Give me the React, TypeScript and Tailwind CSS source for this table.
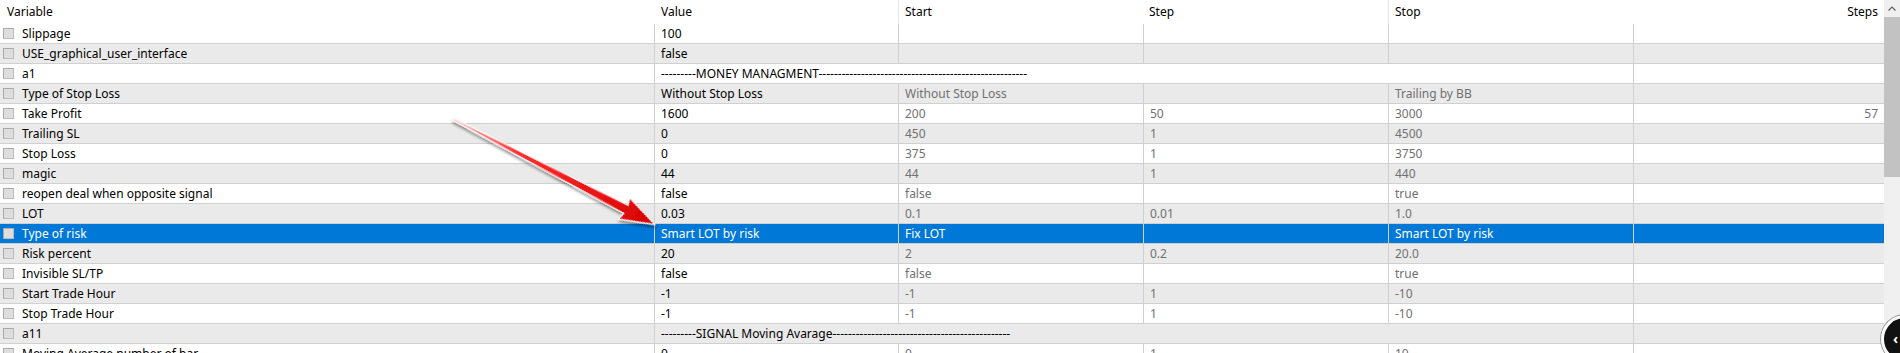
type Row = {
  name: string;
  value?: string;
  start?: string;
  step?: string;
  stop?: string;
  steps?: string;
  span?: boolean;
  selected?: boolean;
};

const rows: Row[] = [
  { name: "Slippage", value: "100" },
  { name: "USE_graphical_user_interface", value: "false" },
  {
    name: "a1",
    value: "---------MONEY MANAGMENT------------------------------------------------------",
    span: true,
  },
  {
    name: "Type of Stop Loss",
    value: "Without Stop Loss",
    start: "Without Stop Loss",
    stop: "Trailing by BB",
  },
  { name: "Take Profit", value: "1600", start: "200", step: "50", stop: "3000", steps: "57" },
  { name: "Trailing SL", value: "0", start: "450", step: "1", stop: "4500" },
  { name: "Stop Loss", value: "0", start: "375", step: "1", stop: "3750" },
  { name: "magic", value: "44", start: "44", step: "1", stop: "440" },
  { name: "reopen deal when opposite signal", value: "false", start: "false", stop: "true" },
  { name: "LOT", value: "0.03", start: "0.1", step: "0.01", stop: "1.0" },
  {
    name: "Type of risk",
    value: "Smart LOT by risk",
    start: "Fix LOT",
    stop: "Smart LOT by risk",
    selected: true,
  },
  { name: "Risk percent", value: "20", start: "2", step: "0.2", stop: "20.0" },
  { name: "Invisible SL/TP", value: "false", start: "false", stop: "true" },
  { name: "Start Trade Hour", value: "-1", start: "-1", step: "1", stop: "-10" },
  { name: "Stop Trade Hour", value: "-1", start: "-1", step: "1", stop: "-10" },
  {
    name: "a11",
    value: "---------SIGNAL Moving Avarage----------------------------------------------",
    span: true,
  },
  { name: "Moving Average number of bar", value: "0", start: "0", step: "1", stop: "10" },
];

const Checkbox = () => (
  <div className="h-[11px] w-[11px] shrink-0 border border-[#bcbcbc] border-l-[#a8a8a8] border-t-[#a8a8a8] bg-[#dedede]" />
);

const ArrowOverlay = () => (
  <svg
    className="pointer-events-none absolute left-0 top-0"
    width="1900"
    height="353"
    viewBox="0 0 1900 353"
  >
    <defs>
      <linearGradient id="arrowFill" x1="0" y1="0" x2="1" y2="0">
        <stop offset="0" stopColor="#ffd0d0" />
        <stop offset="0.3" stopColor="#ff3030" />
        <stop offset="1" stopColor="#d80000" />
      </linearGradient>
      <filter id="arrowShadow" x="-20%" y="-50%" width="140%" height="200%">
        <feDropShadow dx="1.5" dy="2" stdDeviation="1.5" floodColor="#000" floodOpacity="0.45" />
      </filter>
    </defs>
    <g transform="translate(453 119) rotate(27.6)" filter="url(#arrowShadow)">
      <polygon
        points="0,-1.2 195,-4.5 193,-12 228,0 193,12 195,4.5 0,1.2"
        fill="url(#arrowFill)"
        stroke="#ffffff"
        strokeWidth="1.2"
        strokeLinejoin="round"
      />
    </g>
  </svg>
);

const Scrollbar = () => (
  <div className="flex w-[16px] shrink-0 flex-col bg-[#f0f0f0]">
    <div className="flex h-[17px] items-center justify-center">
      <svg width="8" height="5" viewBox="0 0 8 5">
        <path d="M0.5 4.5 L4 1 L7.5 4.5" fill="none" stroke="#606060" strokeWidth="1.2" />
      </svg>
    </div>
    <div className="h-[160px] bg-[#c2c2c2]" />
  </div>
);

const Cell = ({
  text,
  dark,
  selected,
  right,
}: {
  text?: string;
  dark?: boolean;
  selected?: boolean;
  right?: boolean;
}) => (
  <div
    className={
      "flex items-center overflow-hidden whitespace-nowrap border-l border-[#d0d0d0] px-[6px] " +
      (right ? "justify-end " : "") +
      (selected ? "text-white" : dark ? "text-black" : "text-[#707070]")
    }
  >
    {text}
  </div>
);

export default function App() {
  return (
    <div className="relative h-[353px] w-[1900px] overflow-hidden bg-white font-['Noto_Sans',sans-serif] text-[12px]">
      <div className="flex">
        <div className="w-[1884px]">
          {/* header */}
          <div className="grid h-[24px] grid-cols-[654px_244px_245px_245px_245px_1fr] text-black">
            <div className="flex items-center pl-[7px]">Variable</div>
            <div className="flex items-center px-[7px]">Value</div>
            <div className="flex items-center border-l border-[#e5e5e5] px-[6px]">Start</div>
            <div className="flex items-center px-[6px]">Step</div>
            <div className="flex items-center border-l border-[#e5e5e5] px-[6px]">Stop</div>
            <div className="flex items-center justify-end px-[6px]">Steps</div>
          </div>

          {rows.map((r, i) => (
            <div
              key={r.name}
              className={
                "grid h-[20px] grid-cols-[654px_244px_245px_245px_245px_1fr] border-b border-[#d0d0d0] " +
                (r.selected ? "bg-[#0078d7]" : i % 2 === 1 ? "bg-[#eaeaea]" : "bg-white")
              }
            >
              <div
                className={
                  "flex items-center gap-[8px] whitespace-nowrap pl-[3px] " +
                  (r.selected ? "text-white" : "text-black")
                }
              >
                <Checkbox />
                <span>{r.name}</span>
              </div>
              {r.span ? (
                <>
                  <div className="col-span-4 flex items-center whitespace-nowrap border-l border-[#d0d0d0] px-[6px] text-black">
                    {r.value}
                  </div>
                  <Cell />
                </>
              ) : (
                <>
                  <Cell text={r.value} dark selected={r.selected} />
                  <Cell text={r.start} selected={r.selected} />
                  <Cell text={r.step} selected={r.selected} />
                  <Cell text={r.stop} selected={r.selected} />
                  <Cell text={r.steps} selected={r.selected} right />
                </>
              )}
            </div>
          ))}
        </div>
        <Scrollbar />
      </div>

      <ArrowOverlay />

      {/* floating round button, bottom right */}
      <div className="absolute left-[1881px] top-[315px] flex h-[48px] w-[48px] items-center rounded-full border-[3px] border-white bg-[#111] pl-[9px] shadow-[0_0_0_1px_#9a9a9a]">
        <span className="text-[14px] font-bold leading-none text-white">‹</span>
      </div>
    </div>
  );
}
